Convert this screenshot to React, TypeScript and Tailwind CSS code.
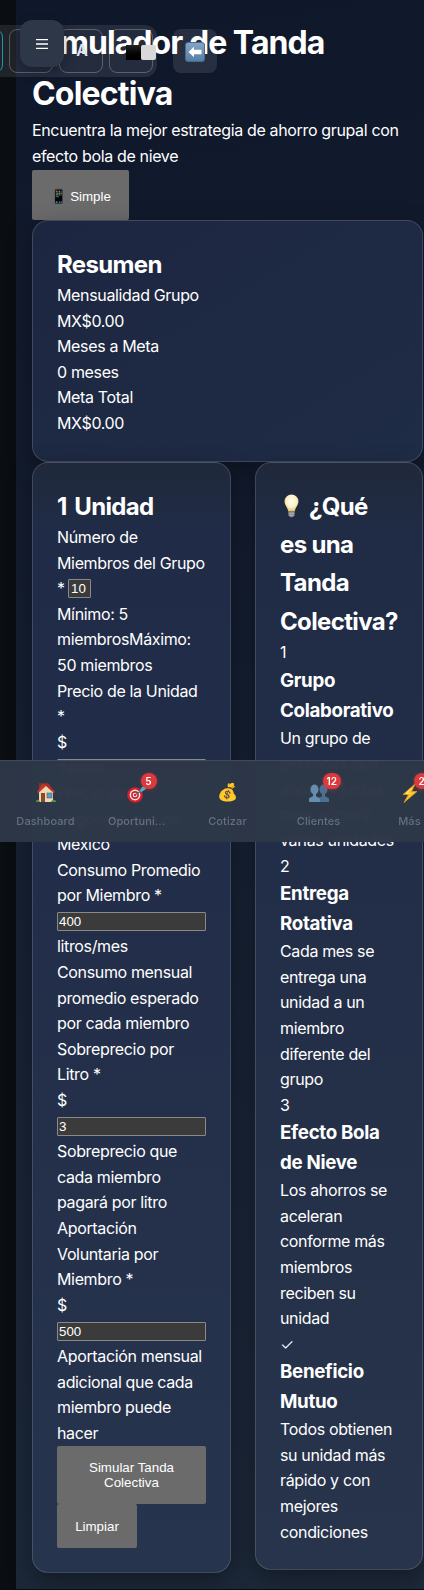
import type { ReactNode } from "react";

const card =
  "rounded-[16px] border border-white/15 p-6 shadow-[0_8px_24px_rgba(0,0,0,0.35)]";
const button =
  "block rounded-[2px] bg-[#6b6b6b] px-[18px] text-center font-['Liberation_Sans',sans-serif] text-[13.33px] leading-[15px] tracking-normal text-white";
const input =
  "box-border h-[19px] rounded-[1px] border border-[#8b8984] bg-[#3b3b3b] font-['Liberation_Sans',sans-serif] text-[13.33px] leading-[15px] tracking-normal text-white";

function Heading({ children }: { children: ReactNode }) {
  return (
    <h2 className="h-[38.4px] pt-px text-[24px] leading-[38.4px] font-bold tracking-[-0.65px]">{children}</h2>
  );
}

function Step({ mark, title, lines }: { mark: string; title: string[]; lines: string[] }) {
  return (
    <div>
      <div className={mark === "✓" ? "font-light" : ""}>{mark}</div>
      <h3 className="text-[18.72px] leading-[29.95px] font-bold tracking-[-0.3px]">
        {title.map((t) => <div key={t}>{t}</div>)}
      </h3>
      {lines.map((l) => <div key={l}>{l}</div>)}
    </div>
  );
}

function Field({ value }: { value: string }) {
  return (
    <div className="flex h-[25.6px] items-center">
      <input className={`${input} w-[149px] px-[1px]`} defaultValue={value} />
    </div>
  );
}

function Lines({ items }: { items: string[] }) {
  return <>{items.map((l) => <div key={l}>{l}</div>)}</>;
}

function House() {
  return (
    <svg width="20" height="21" viewBox="0 0 20 21">
      <rect x="3" y="1" width="3" height="6" fill="#8d3028" />
      <path d="M3 9 10 3l7 6v11H3z" fill="#ecd9b4" />
      <path d="M1 10 7 1.500h5L19 10l-1.500 1L10 4 2.500 11z" fill="#c53a2c" />
      <path d="M7 2h5l5 6-2 0-5-4.500z" fill="#a82e25" />
      <rect x="5" y="11" width="4" height="9" fill="#8a4b2d" />
      <rect x="11" y="11" width="5" height="5" fill="#4f9fd6" stroke="#7a5a40" strokeWidth=".6" />
      <path d="M0 20c0-3 3-3 4 0zM15 20c1-3 5-3 5 0z" fill="#5c8f34" />
    </svg>
  );
}

function Dart() {
  return (
    <svg width="20" height="20" viewBox="0 0 20 20">
      <circle cx="8" cy="12" r="7.800" fill="#d2212b" />
      <circle cx="8" cy="12" r="5.400" fill="#f3e9e9" />
      <circle cx="8" cy="12" r="3.900" fill="#d2212b" />
      <circle cx="8" cy="12" r="2.300" fill="#f3e9e9" />
      <circle cx="8" cy="12" r="1.200" fill="#d2212b" />
      <path d="M8.500 11.500 14 8" stroke="#3d6d80" strokeWidth="1.200" />
      <path d="m12.500 8 2.500-4 5-2-1 4-4.500 3z" fill="#45b8cc" />
    </svg>
  );
}

function Bolt() {
  return (
    <svg width="16" height="20" viewBox="0 0 16 20">
      <path d="M13.500.5 1 11.500l5.500 0L2 19.500 15 8.500H9.500z" fill="#fcc529" stroke="#e59a1b" strokeWidth=".8" strokeLinejoin="round" />
      <path d="M10 5 4 10.500h4.500" fill="none" stroke="#ffe68a" />
    </svg>
  );
}

function Bulb() {
  return (
    <svg className="mt-[6px] ml-[4px]" width="15" height="24" viewBox="0 0 15 24">
      <defs>
        <radialGradient id="glow" cx=".5" cy=".4" r=".6">
          <stop offset="0" stopColor="#fffdf0" />
          <stop offset=".6" stopColor="#fbf2c4" />
          <stop offset="1" stopColor="#d9bd69" />
        </radialGradient>
      </defs>
      <path d="M7.500.5a7 7 0 0 1 7 7c0 4-3.200 5.500-3.700 10H4.200C3.700 13 .5 11.500.5 7.500a7 7 0 0 1 7-7z" fill="url(#glow)" />
      <path d="M4.500 17.500h6v4l-2 1.700h-2l-2-1.700z" fill="#86868a" />
      <path d="M4.500 19.200h6M4.700 21.200h5.600" stroke="#c4c4c8" strokeWidth=".7" />
    </svg>
  );
}

function People() {
  return (
    <svg width="20" height="18" viewBox="0 0 20 18">
      <g fill="#4d7090">
        <ellipse cx="14.500" cy="5.500" rx="4" ry="5" />
        <path d="M10 18v-3c0-2 3-2 3-3V9h3v3c0 1 4 1 4 3v3z" />
      </g>
      <g fill="#668cae">
        <ellipse cx="5.500" cy="5.500" rx="4" ry="5" />
        <path d="M0 18v-3c0-2 4-2 4-3V9h3v3c0 1 4 1 4 3v3z" />
      </g>
    </svg>
  );
}

function BackArrow() {
  return (
    <svg width="20" height="20" viewBox="0 0 20 20">
      <defs>
        <linearGradient id="back" x1="0" y1="0" x2="0" y2="1">
          <stop offset="0" stopColor="#83a7c8" />
          <stop offset="1" stopColor="#557da3" />
        </linearGradient>
      </defs>
      <rect x=".5" y=".5" width="19" height="19" rx="2.500" fill="url(#back)" stroke="#456b90" />
      <path d="M3.500 10 9 4.700v3.100h7.500v4.400H9v3.100z" fill="#fff" />
    </svg>
  );
}

function NavItem({ icon, label, badge }: { icon: ReactNode; label: string; badge?: string }) {
  return (
    <div className="flex w-[91px] shrink-0 flex-col items-center pt-[19px]">
      <div className="relative flex h-[25px] w-5 items-center justify-center text-[17px] leading-[25px]">
        {icon}
        {badge && (
          <span className="absolute -top-[7px] left-[14px] flex h-4 min-w-4 items-center justify-center rounded-full bg-[#dc3a3d] px-[4px] text-[10px] leading-4 font-semibold tracking-normal text-white shadow-[0_1px_4px_rgba(220,58,61,0.4)]">
            {badge}
          </span>
        )}
      </div>
      <div className="mt-[7px] text-[11px] leading-[18px] font-medium tracking-[0.1px] text-[#666f7d]">
        {label}
      </div>
    </div>
  );
}

const toolButton = "flex h-11 w-11 shrink-0 items-center justify-center rounded-[8px] border border-white/25";

export default function App() {
  return (
    <div className="relative h-[1590px] w-[424px] overflow-hidden bg-[#0a0e13] pl-4 font-['Inter',sans-serif] text-[16px] leading-[25.6px] tracking-[-0.35px] text-white">
      <main className="h-[1589px] w-[408px] bg-linear-170 from-[#0f172a] to-[#1d293a] pt-4 pl-4">
        <header className="h-[203.6px] whitespace-nowrap">
          <h1 className="h-[102.4px] pt-[0.5px] text-[32px] leading-[51.2px] font-bold">
            <div className="tracking-[-0.95px]">Simulador de Tanda</div>
            <div className="tracking-[-0.8px]">Colectiva</div>
          </h1>
          <p>
            Encuentra la mejor estrategia de ahorro grupal con
            <br />
            efecto bola de nieve
          </p>
          <button className={`${button} flex h-[50px] w-[97px] items-center justify-center gap-[3px] pt-[3px]`}>
            <span className="w-[17px] text-[14px]">📱</span>
            <span>Simple</span>
          </button>
        </header>

        <section className={`${card} h-[242px] w-[391px] bg-linear-to-br from-[#1d2641] to-[#1f2c45]`}>
          <Heading>Resumen</Heading>
          <Lines items={["Mensualidad Grupo", "MX$0.00", "Meses a Meta", "0 meses", "Meta Total"]} />
          <div>MX$0.00</div>
        </section>

        <div className="flex items-start gap-6 whitespace-nowrap">
          <section className={`${card} h-[1111px] w-[199px] shrink-0 bg-linear-to-b from-[#1f293a] via-[#202b47] via-[6%] to-[#27344d]`}>
            <Heading>
              <span className="[word-spacing:2.5px]">1 Unidad</span>
            </Heading>
            <Lines items={["Número de", "Miembros del Grupo"]} />
            <div className="flex h-[25.6px] items-center">
              <span className="w-[11px]">*</span>
              <input className={`${input} w-[23px] pl-[2px]`} defaultValue="10" />
            </div>
            <Lines items={["Mínimo: 5", "miembrosMáximo:", "50 miembros", "Precio de la Unidad", "*", "$"]} />
            <Field value="749000" />
            <Lines items={["Precio de la", "Vagoneta que de", "México", "Consumo Promedio", "por Miembro *"]} />
            <Field value="400" />
            <Lines items={["litros/mes", "Consumo mensual", "promedio esperado", "por cada miembro", "Sobreprecio por", "Litro *", "$"]} />
            <Field value="3" />
            <Lines items={["Sobreprecio que", "cada miembro", "pagará por litro", "Aportación", "Voluntaria por", "Miembro *", "$"]} />
            <Field value="500" />
            <Lines items={["Aportación mensual", "adicional que cada", "miembro puede", "hacer"]} />
            <button className={`${button} h-[58px] w-[149px]`}>
              Simular Tanda
              <br />
              Colectiva
            </button>
            <button className={`${button} h-11 w-20`}>Limpiar</button>
          </section>

          <section className={`${card} h-[1108px] w-[168px] shrink-0 bg-linear-to-b from-[#1f293a] via-[#202b45] via-[6%] to-[#27344b]`}>
            <Heading>
              <div className="flex">
                <span className="w-[29px]"><Bulb /></span>¿Qué
              </div>
            </Heading>
            <Heading>es una</Heading>
            <Heading>Tanda</Heading>
            <Heading>Colectiva?</Heading>
            <Step
              mark="1"
              title={["Grupo", "Colaborativo"]}
              lines={["Un grupo de", "personas que", "ahorran juntas", "para adquirir", "varias unidades"]}
            />
            <Step
              mark="2"
              title={["Entrega", "Rotativa"]}
              lines={["Cada mes se", "entrega una", "unidad a un", "miembro", "diferente del", "grupo"]}
            />
            <Step
              mark="3"
              title={["Efecto Bola", "de Nieve"]}
              lines={["Los ahorros se", "aceleran", "conforme más", "miembros", "reciben su", "unidad"]}
            />
            <Step
              mark="✓"
              title={["Beneficio", "Mutuo"]}
              lines={["Todos obtienen", "su unidad más", "rápido y con", "mejores", "condiciones"]}
            />
          </section>
        </div>
      </main>

      <div className="absolute top-[25px] -left-[45px] flex h-[52px] w-[202px] items-center gap-[6px] rounded-[12px] bg-white/9 pl-1">
        <div className="h-11 w-11 shrink-0 rounded-[8px] border border-[#1c9aac]" />
        <div className={toolButton} />
        <div className={toolButton}>
          <span className="pl-[2px] text-[16px] font-semibold text-[#dce4f3]">A</span>
        </div>
        <div className={`${toolButton} pt-[3px] pl-[20px]`}>
          <span className="h-[15px] w-[15px] shrink-0 bg-linear-to-b from-[#242424] to-black" />
          <span className="h-[15px] w-[15px] shrink-0 rounded-[2px] bg-[#d8d8d8]" />
        </div>
      </div>

      <div className="absolute top-[29px] left-[173px] flex h-11 w-11 items-center justify-center rounded-[8px] bg-white/10 pb-px pt-[3px]">
        <BackArrow />
      </div>

      <button className="absolute top-5 left-5 flex h-[47px] w-11 items-center justify-center rounded-[12px] bg-[#2d3748] pt-px shadow-[0_4px_12px_rgba(0,0,0,0.3)]">
        <svg width="12" height="10" viewBox="0 0 12 10" fill="none" stroke="#fff" strokeWidth="1.300">
          <path d="M0 .6h12M0 5h12M0 9.400h12" />
        </svg>
      </button>

      <nav className="absolute top-[760px] left-0 flex h-[82px] w-[456px] border-t border-white/10 bg-[#2d3748]/98 backdrop-blur-[1px]">
        <NavItem icon={<House />} label="Dashboard" />
        <NavItem icon={<Dart />} label="Oportuni..." badge="5" />
        <NavItem icon="💰" label="Cotizar" />
        <NavItem icon={<People />} label="Clientes" badge="12" />
        <NavItem icon={<Bolt />} label="Más" badge="2" />
      </nav>
    </div>
  );
}
